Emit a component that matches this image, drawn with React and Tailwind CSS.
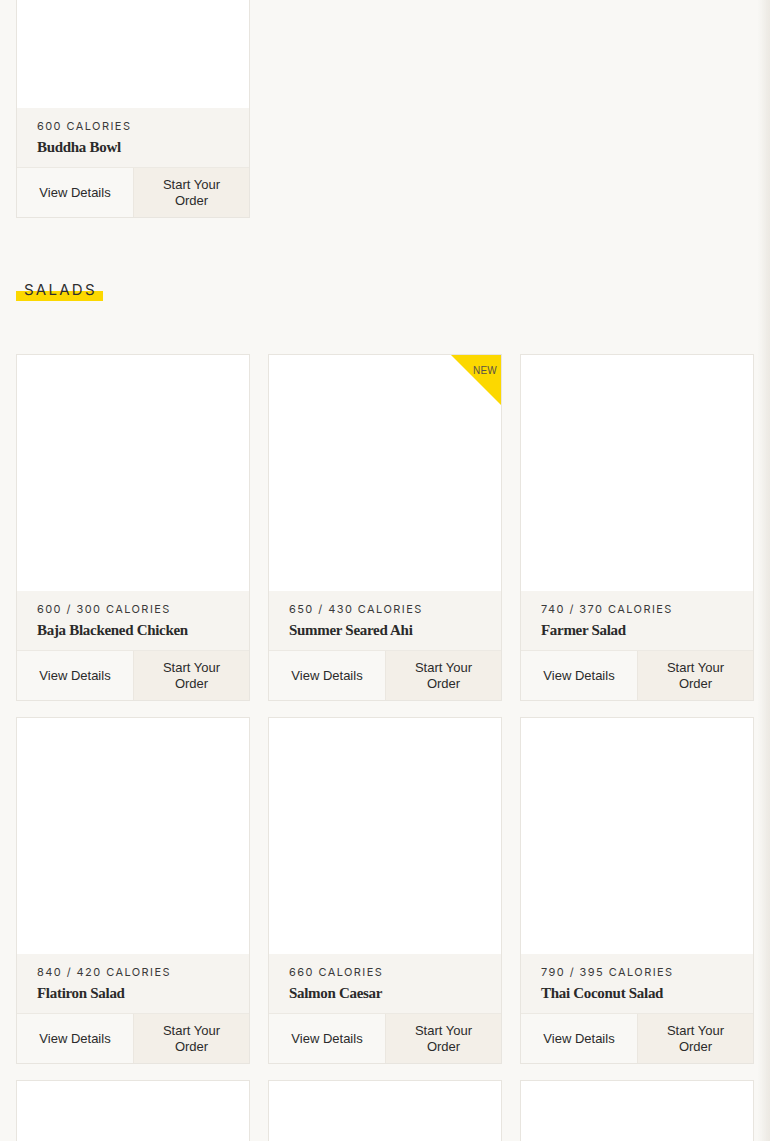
const salads = [
  { cal: '600 / 300 CALORIES', name: 'Baja Blackened Chicken' },
  { cal: '650 / 430 CALORIES', name: 'Summer Seared Ahi', isNew: true },
  { cal: '740 / 370 CALORIES', name: 'Farmer Salad' },
  { cal: '840 / 420 CALORIES', name: 'Flatiron Salad' },
  { cal: '660 CALORIES', name: 'Salmon Caesar' },
  { cal: '790 / 395 CALORIES', name: 'Thai Coconut Salad' },
  { cal: '', name: '' },
  { cal: '', name: '' },
  { cal: '', name: '' },
];

function MenuCard({ cal, name, isNew }) {
  return (
    <div className="relative flex flex-col border border-[#e8e5df] bg-white">
      <div className="h-[236px] bg-white" />
      {isNew && (
        <div className="absolute right-0 top-0 h-[50px] w-[50px]">
          <svg width="50" height="50" viewBox="0 0 50 50" className="absolute inset-0">
            <polygon points="0,0 50,0 50,50" fill="#fcd800" />
          </svg>
          <span className="absolute right-[4px] top-[8px] text-[10px] font-normal tracking-[0.02em] text-[#5a5247] [font-family:'Liberation_Sans',Arial,sans-serif]">
            NEW
          </span>
        </div>
      )}
      <div className="flex h-[60px] flex-col justify-center border-b border-[#ece9e3] bg-[#f6f4f0] px-5 pb-[1px]">
        <div className="text-[11px] leading-[14px] tracking-[0.13em] text-[#3a3a3a] [font-family:Inter,'Liberation_Sans',sans-serif]">
          {cal}
        </div>
        <div className="mt-[5px] text-[15px] font-bold leading-[18px] tracking-[-0.02em] text-[#2a2a2a] [font-family:'Liberation_Serif','DejaVu_Serif',serif]">
          {name}
        </div>
      </div>
      <div className="grid h-[49px] grid-cols-2">
        <button className="flex items-center justify-center bg-[#f9f8f5] text-[13px] leading-[16px] text-[#2b2b2b] [font-family:'Liberation_Sans',Arial,sans-serif]">
          View Details
        </button>
        <button className="flex items-center justify-center border-l border-[#ebe7e0] bg-[#f3efe8] px-4 text-center text-[13px] leading-[16px] text-[#2b2b2b] [font-family:'Liberation_Sans',Arial,sans-serif]">
          Start Your Order
        </button>
      </div>
    </div>
  );
}

export default function App() {
  return (
    <div className="min-h-screen overflow-hidden bg-[#f9f8f5]">
      <div className="px-4">
        <div className="mt-[-129px] grid grid-cols-3 gap-x-[18px]">
          <MenuCard cal="600 CALORIES" name="Buddha Bowl" />
        </div>

        <div className="mt-[59px]">
          <h2 className="relative inline-block pl-2 pr-[6px] text-[15px] leading-[20px] tracking-[0.15em] text-[#2f2f2f] [font-family:Inter,'Liberation_Sans',sans-serif]">
            <span className="absolute bottom-[-1px] left-0 right-0 h-[10px] bg-[#fcd800]" />
            <span className="relative">SALADS</span>
          </h2>
        </div>

        <div className="mt-[53px] grid grid-cols-3 gap-x-[18px] gap-y-[16px]">
          {salads.map((s, i) => (
            <MenuCard key={i} {...s} />
          ))}
        </div>
      </div>
      <div className="pointer-events-none fixed right-0 top-0 h-full w-[12px] bg-gradient-to-r from-transparent to-[#ebe8e2]" />
    </div>
  );
}
